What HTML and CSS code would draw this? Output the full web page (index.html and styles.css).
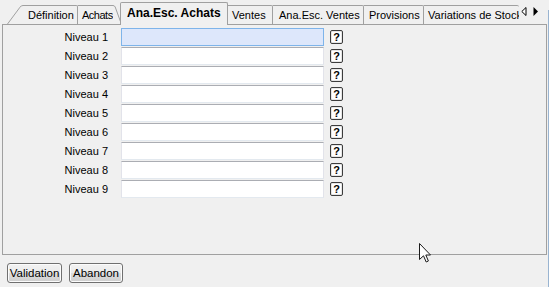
FILE: index.html
```html
<!DOCTYPE html>
<html lang="fr">
<head>
<meta charset="utf-8">
<title>Ana.Esc. Achats</title>
<link rel="stylesheet" href="styles.css">
</head>
<body>
<div class="window">
  <div class="main">
    <div class="strip">
      <svg class="slant-left" width="16" height="19" viewBox="0 0 16 19"><path d="M0.5 19 L13 2.2 Q14 0.5 16 0.5" fill="#f0f0f0" stroke="#a0a0a0" stroke-width="1"/></svg>
      <div class="tab t-def">Définition</div>
      <div class="tab t-ach">Achats</div>
      <svg class="slant-right" width="8" height="19" viewBox="0 0 8 19"><path d="M0 0.5 Q1.5 0.5 2.2 2 L8 18" fill="none" stroke="#a0a0a0" stroke-width="1"/></svg>
      <div class="tab active">Ana.Esc. Achats</div>
      <div class="tab t-ven">Ventes</div>
      <div class="tab t-anv">Ana.Esc. Ventes</div>
      <div class="tab t-pro">Provisions</div>
      <div class="tab t-var">Variations de Stock</div>
      <div class="arrows">
        <svg width="6" height="9" viewBox="0 0 6 9"><path d="M5 0.5 L0.8 4.5 L5 8.5 Z" fill="#fff" stroke="#000" stroke-width="1"/></svg>
        <svg width="6" height="9" viewBox="0 0 6 9"><path d="M0.5 0 L5 4.5 L0.5 9 Z" fill="#000"/></svg>
      </div>
    </div>
    <div class="panel">
      <div class="form">
        <label class="lbl">Niveau 1</label><div class="field focus"></div><div class="help">?</div>
        <label class="lbl">Niveau 2</label><div class="field"></div><div class="help">?</div>
        <label class="lbl">Niveau 3</label><div class="field"></div><div class="help">?</div>
        <label class="lbl">Niveau 4</label><div class="field"></div><div class="help">?</div>
        <label class="lbl">Niveau 5</label><div class="field"></div><div class="help">?</div>
        <label class="lbl">Niveau 6</label><div class="field"></div><div class="help">?</div>
        <label class="lbl">Niveau 7</label><div class="field"></div><div class="help">?</div>
        <label class="lbl">Niveau 8</label><div class="field"></div><div class="help">?</div>
        <label class="lbl">Niveau 9</label><div class="field"></div><div class="help">?</div>
      </div>
    </div>
    <div class="buttons">
      <div class="btn b-val">Validation</div>
      <div class="btn b-aba">Abandon</div>
    </div>
  </div>
  <div class="edge"></div>
</div>
<svg class="cursor" width="13" height="20" viewBox="0 0 13 20"><path d="M0.5 0.5 L0.5 16.5 L4.5 12.8 L7.2 19 L9.4 18 L6.8 12 L11.5 12 Z" fill="#fff" stroke="#1a1a1a" stroke-width="1" stroke-linejoin="miter"/></svg>
</body>
</html>
```
FILE: styles.css
```css
html, body {
  margin: 0;
  padding: 0;
  background: #f0f0f0;
}
body {
  width: 549px;
  height: 287px;
  overflow: hidden;
  font-family: "Liberation Sans", Arial, sans-serif;
  font-size: 11px;
  color: #000;
}
.window {
  display: flex;
  height: 287px;
}
.main {
  width: 548px;
  display: flex;
  flex-direction: column;
}
.edge {
  width: 1px;
  margin-top: 10px;
  background: #99b4d1;
}
.strip {
  display: flex;
  align-items: flex-end;
  height: 24px;
  padding-left: 7px;
  position: relative;
  z-index: 2;
}
.slant-left, .slant-right {
  flex: none;
  display: block;
}
.tab {
  flex: none;
  box-sizing: border-box;
  height: 19px;
  border-top: 1px solid #a0a0a0;
  border-right: 1px solid #a0a0a0;
  border-top-right-radius: 2px;
  line-height: 18px;
  white-space: nowrap;
  overflow: hidden;
  padding-left: 5px;
  background: #f0f0f0;
}
.t-def { width: 55px; }
.t-ach {
  width: 35px;
  padding-left: 4px;
  letter-spacing: -0.5px;
  border-right: none;
  border-top-right-radius: 0;
}
.active {
  width: 108px;
  height: 23px;
  margin-left: -1px;
  margin-bottom: -1px;
  border-left: 1px solid #a0a0a0;
  border-top-left-radius: 2px;
  font-weight: bold;
  font-size: 12px;
  line-height: 20px;
  padding-left: 6px;
  position: relative;
  z-index: 3;
}
.t-ven { width: 45px; padding-left: 4px; }
.t-anv { width: 91px; padding-left: 6px; }
.t-pro { width: 60px; padding-left: 5px; }
.t-var { width: 95px; padding-left: 4px; border-right: none; }
.arrows {
  flex: none;
  display: flex;
  gap: 6px;
  align-self: flex-start;
  margin-top: 7px;
  margin-left: 2px;
}
.arrows svg { display: block; }
.panel {
  box-sizing: border-box;
  margin-left: 2px;
  width: 545px;
  height: 231px;
  border: 1px solid #a0a0a0;
  position: relative;
  z-index: 1;
}
.form {
  display: grid;
  grid-template-columns: 105px 203px 13px;
  column-gap: 13px;
  row-gap: 1px;
  grid-auto-rows: 18px;
  padding-top: 3px;
  align-items: center;
}
.form .field + .help { margin-left: -7px; }
.lbl {
  text-align: right;
  line-height: 18px;
}
.field {
  box-sizing: border-box;
  height: 18px;
  background: #fff;
  border: 1px solid #e2e3ea;
  border-top-color: #abadb3;
  border-bottom-color: #e3e9ef;
}
.field.focus {
  background: #dde7fb;
  border: 1px solid #7eb4ea;
}
.help {
  box-sizing: border-box;
  width: 13px;
  height: 14px;
  border: 1px solid #3c3c3c;
  border-radius: 2px;
  background: #fff;
  box-shadow: inset 0 0 0 1px #e6e6e6;
  font-weight: bold;
  font-size: 11px;
  line-height: 12px;
  text-align: center;
}
.buttons {
  display: flex;
  gap: 7px;
  padding-left: 7px;
  margin-top: 8px;
}
.btn {
  box-sizing: border-box;
  height: 20px;
  border: 1px solid #707070;
  border-radius: 3px;
  background: linear-gradient(#f2f2f2 0%, #ebebeb 50%, #dddddd 51%, #cfcfcf 100%);
  box-shadow: inset 0 0 0 1px #fcfcfc;
  font-size: 11.5px;
  line-height: 18px;
  text-align: center;
}
.b-val { width: 55px; }
.b-aba { width: 54px; }
.cursor {
  position: absolute;
  left: 419px;
  top: 243px;
  z-index: 10;
}
```
